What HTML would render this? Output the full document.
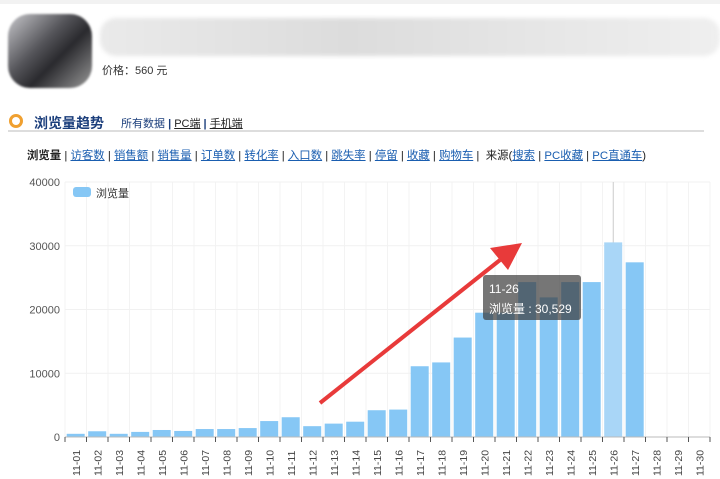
<!DOCTYPE html>
<html><head><meta charset="utf-8"><style>
body{margin:0;width:720px;height:479px;background:#fff;font-family:"Liberation Sans","Noto Sans CJK SC",sans-serif;position:relative;overflow:hidden}
.a{position:absolute}
a,.u{color:#1a5eb0;text-decoration:underline}
</style></head><body>
<div class="a" style="left:0;top:0;width:720px;height:4px;background:#f2f2f2"></div>
<div class="a" style="left:8px;top:14px;width:84px;height:74px;border-radius:22px;background:linear-gradient(135deg,#c8c8cc 0%,#55555a 40%,#2a2a2e 60%,#999 100%);filter:blur(1px)"></div>
<div class="a" style="left:100px;top:18px;width:620px;height:38px;border-radius:16px;background:linear-gradient(90deg,#eaeaea,#dcdcdc 40%,#e6e6e6 70%,#efefef);filter:blur(2px)"></div>
<div class="a" style="left:102px;top:62px;font-size:11px;color:#333">价格：560 元</div>
<div class="a" style="left:9px;top:114px;width:8px;height:8px;border:3px solid #f0a030;border-radius:50%;background:#fff"></div>
<div class="a" style="left:34px;top:113px;font-size:14px;font-weight:bold;color:#1c3f7c">浏览量趋势</div>
<div class="a" style="left:121px;top:115px;font-size:11px;color:#1c3f7c">所有数据 <b>|</b> <span style="text-decoration:underline;color:#222">PC端</span> <b>|</b> <span style="text-decoration:underline;color:#222">手机端</span></div>
<div class="a" style="left:8px;top:130px;width:696px;height:2px;background:#ddd"></div>
<div class="a" style="left:27px;top:147px;font-size:11.4px;color:#222;white-space:nowrap"><b>浏览量</b> | <a>访客数</a> | <a>销售额</a> | <a>销售量</a> | <a>订单数</a> | <a>转化率</a> | <a>入口数</a> | <a>跳失率</a> | <a>停留</a> | <a>收藏</a> | <a>购物车</a> | &nbsp;来源(<a>搜索</a> | <a>PC收藏</a> | <a>PC直通车</a>)</div>
<svg class="a" style="left:0;top:0" width="720" height="479" id="s"></svg>
<script>
var v=[500,900,500,800,1100,950,1250,1250,1400,2500,3100,1700,2100,2400,4200,4300,11100,11700,15600,19500,19500,24300,21900,24300,24300,30529,27400,0,0,0];
var h='',x0=65,cw=21.5,b=437,k=255/40000;
for(var i=0;i<=30;i++){var x=x0+i*cw;h+='<line x1="'+x+'" y1="182" x2="'+x+'" y2="'+b+'" stroke="#f3f3f3"/>';}
[0,10000,20000,30000,40000].forEach(function(t){var y=b-t*k;h+='<line x1="'+x0+'" y1="'+y+'" x2="710" y2="'+y+'" stroke="#f1f1f1"/><text x="60" y="'+(y+4)+'" font-size="11" fill="#555" text-anchor="end">'+t+'</text>';});
h+='<line x1="'+(x0+25.5*cw)+'" y1="182" x2="'+(x0+25.5*cw)+'" y2="'+b+'" stroke="#ccc"/>';
for(var i=0;i<30;i++){var x=x0+i*cw+1.7,hh=v[i]*k;if(v[i])h+='<rect x="'+x+'" y="'+(b-hh)+'" width="18" height="'+hh+'" fill="'+(i==25?'#a9d6f7':'#86c7f5')+'"/>';
var cx=x0+i*cw+cw/2+4;h+='<text transform="translate('+cx+',476) rotate(-90)" font-size="10.5" fill="#444">11-'+(i<9?'0':'')+(i+1)+'</text>';}
h+='<line x1="'+x0+'" y1="'+b+'" x2="710" y2="'+b+'" stroke="#bbb"/>';
for(var i=0;i<=30;i++){var x=x0+i*cw;h+='<line x1="'+x+'" y1="'+b+'" x2="'+x+'" y2="'+(b+5)+'" stroke="#555"/>';}
h+='<rect x="73" y="187" width="18" height="10" rx="3" fill="#86c7f5"/><text x="96" y="197" font-size="11" fill="#333">浏览量</text>';
h+='<line x1="320" y1="403" x2="500" y2="260" stroke="#e83a3a" stroke-width="4"/><polygon points="522,243 490,248 508,270" fill="#e83a3a"/>';
h+='<rect x="483" y="275" width="98" height="45" rx="3" fill="rgba(60,60,60,0.7)"/><text x="489" y="293" font-size="12" fill="#fff">11-26</text><text x="489" y="313" font-size="12" fill="#fff">浏览量 : 30,529</text>';
document.getElementById('s').innerHTML=h;
</script>
</body></html>
